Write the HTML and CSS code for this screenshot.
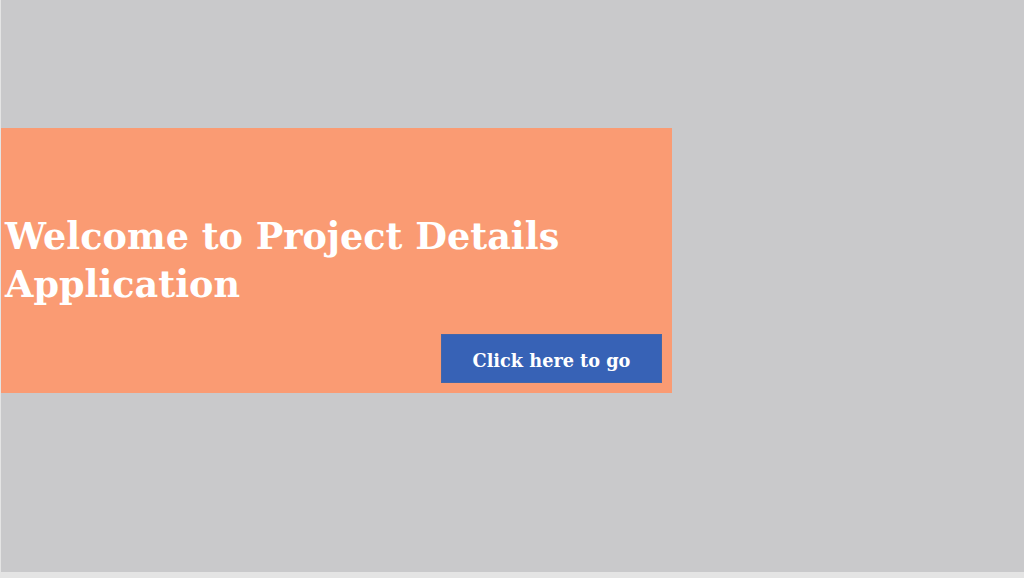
FILE: index.html
```html
<!DOCTYPE html>
<html>
<head>
<meta charset="utf-8">
<link rel="stylesheet" href="styles.css">
</head>
<body>
<div class="stage">
  <section class="panel">
    <h1 class="title">Welcome to Project Details Application</h1>
    <div class="actions">
      <button class="go-btn">Click here to go</button>
    </div>
  </section>
</div>
</body>
</html>
```
FILE: styles.css
```css
html, body {
  margin: 0;
  padding: 0;
  background: #e4e4e4;
}
.stage {
  margin-left: 1px;
  height: 572px;
  background: #c9c9cb;
  padding-top: 128px;
  box-sizing: border-box;
}
.panel {
  width: 671px;
  height: 265px;
  background: #fa9b73;
  box-sizing: border-box;
  padding: 85px 10px 10px 4px;
  display: flex;
  flex-direction: column;
}
.title {
  margin: 0;
  width: 600px;
  font-family: "DejaVu Serif", Georgia, serif;
  font-weight: bold;
  font-size: 36.6px;
  line-height: 48px;
  color: #ffffff;
}
.actions {
  margin-top: auto;
  display: flex;
  justify-content: flex-end;
}
.go-btn {
  width: 221px;
  height: 49px;
  border: 1px solid #4467a8;
  background: #3762b6;
  color: #ffffff;
  font-family: "DejaVu Serif", Georgia, serif;
  font-weight: bold;
  font-size: 17.7px;
  padding: 3px 0 0 0;
}
```
